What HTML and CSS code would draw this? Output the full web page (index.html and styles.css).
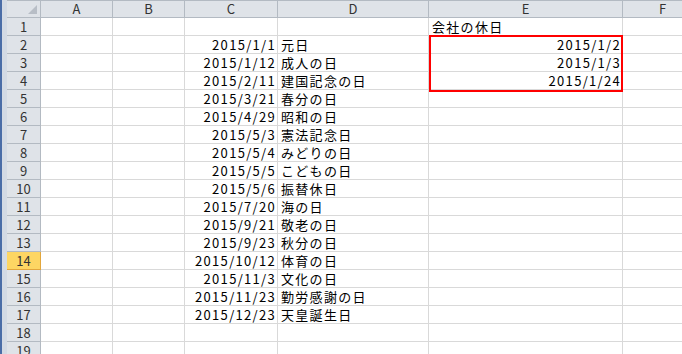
FILE: index.html
```html
<!DOCTYPE html>
<html lang="ja">
<head>
    <meta charset="UTF-8">
    <title>祝日一覧</title>
    <link rel="stylesheet" href="styles.css">
</head>
<body>
    <div class="app">
        <div class="frame"></div>
        <div class="sheet">
            <div class="grid" id="grid"></div>
            <!-- red box around E2:E4 -->
            <div class="mark"></div>
        </div>
    </div>

    <script>
        const grid = document.getElementById('grid');
        const columns = ['A', 'B', 'C', 'D', 'E', 'F'];

        const holidays = [
            ['2015/1/1', '元日'],
            ['2015/1/12', '成人の日'],
            ['2015/2/11', '建国記念の日'],
            ['2015/3/21', '春分の日'],
            ['2015/4/29', '昭和の日'],
            ['2015/5/3', '憲法記念日'],
            ['2015/5/4', 'みどりの日'],
            ['2015/5/5', 'こどもの日'],
            ['2015/5/6', '振替休日'],
            ['2015/7/20', '海の日'],
            ['2015/9/21', '敬老の日'],
            ['2015/9/23', '秋分の日'],
            ['2015/10/12', '体育の日'],
            ['2015/11/3', '文化の日'],
            ['2015/11/23', '勤労感謝の日'],
            ['2015/12/23', '天皇誕生日']
        ];

        const companyDays = ['2015/1/2', '2015/1/3', '2015/1/24'];

        function addCell(text, className) {
            const cell = document.createElement('div');
            cell.className = 'cell ' + (className || '');
            cell.textContent = text || '';
            grid.appendChild(cell);
        }

        // header row
        addCell('', 'head corner');
        columns.forEach((c) => addCell(c, 'head col-head'));

        for (let r = 1; r <= 19; r++) {
            addCell(r, r === 14 ? 'head row-head current' : 'head row-head');
            const h = holidays[r - 2];
            addCell('');
            addCell('');
            addCell(h ? h[0] : '', 'num');
            addCell(h ? h[1] : '');
            if (r === 1) {
                addCell('会社の休日', 'spill');
            } else {
                addCell(companyDays[r - 2] || '', 'num');
            }
            addCell('');
        }
    </script>
</body>
</html>
```

FILE: styles.css
```css
body {
    margin: 0;
    font-family: "Noto Sans CJK JP", sans-serif;
    font-size: 13px;
    background-color: #fff;
    overflow: hidden;
}

.app {
    display: flex;
    height: 354px;
}

.frame {
    flex: none;
    width: 7px;
    background: linear-gradient(to right, #4a6da7 0, #4a6da7 2px, #d3dae4 2px);
}

.sheet {
    position: relative;
    flex: 1;
    overflow: hidden;
}

.grid {
    display: grid;
    grid-template-columns: 34px 72px 72px 93px 151px 194px 80px;
    grid-template-rows: 18px;
    grid-auto-rows: 18px;
}

.cell {
    box-sizing: border-box;
    border-right: 1px solid #d9d9d9;
    border-bottom: 1px solid #d9d9d9;
    padding: 1px 2px 0 3px;
    line-height: 16px;
    letter-spacing: 1.3px;
    white-space: nowrap;
    color: #000;
}

.num {
    text-align: right;
    padding-right: 1px;
}

.spill {
    overflow: visible;
}

.head {
    background-color: #dfe3e8;
    border-color: #b3bac2;
    color: #333;
    text-align: center;
    padding: 0;
    letter-spacing: 0;
}

.col-head,
.corner {
    border-top: 1px solid #b3bac2;
    line-height: 16px;
}

.corner {
    position: relative;
}

.corner::after {
    content: "";
    position: absolute;
    right: 3px;
    bottom: 3px;
    border-style: solid;
    border-width: 0 0 9px 9px;
    border-color: transparent transparent #b8bec6 transparent;
}

.row-head {
    line-height: 17px;
}

.row-head.current {
    background-color: #fdd663;
    border-color: #e2a63c;
}

.mark {
    position: absolute;
    left: 422px;
    top: 35px;
    width: 194px;
    height: 57px;
    box-sizing: border-box;
    border: 2px solid #f00;
    pointer-events: none;
}
```
